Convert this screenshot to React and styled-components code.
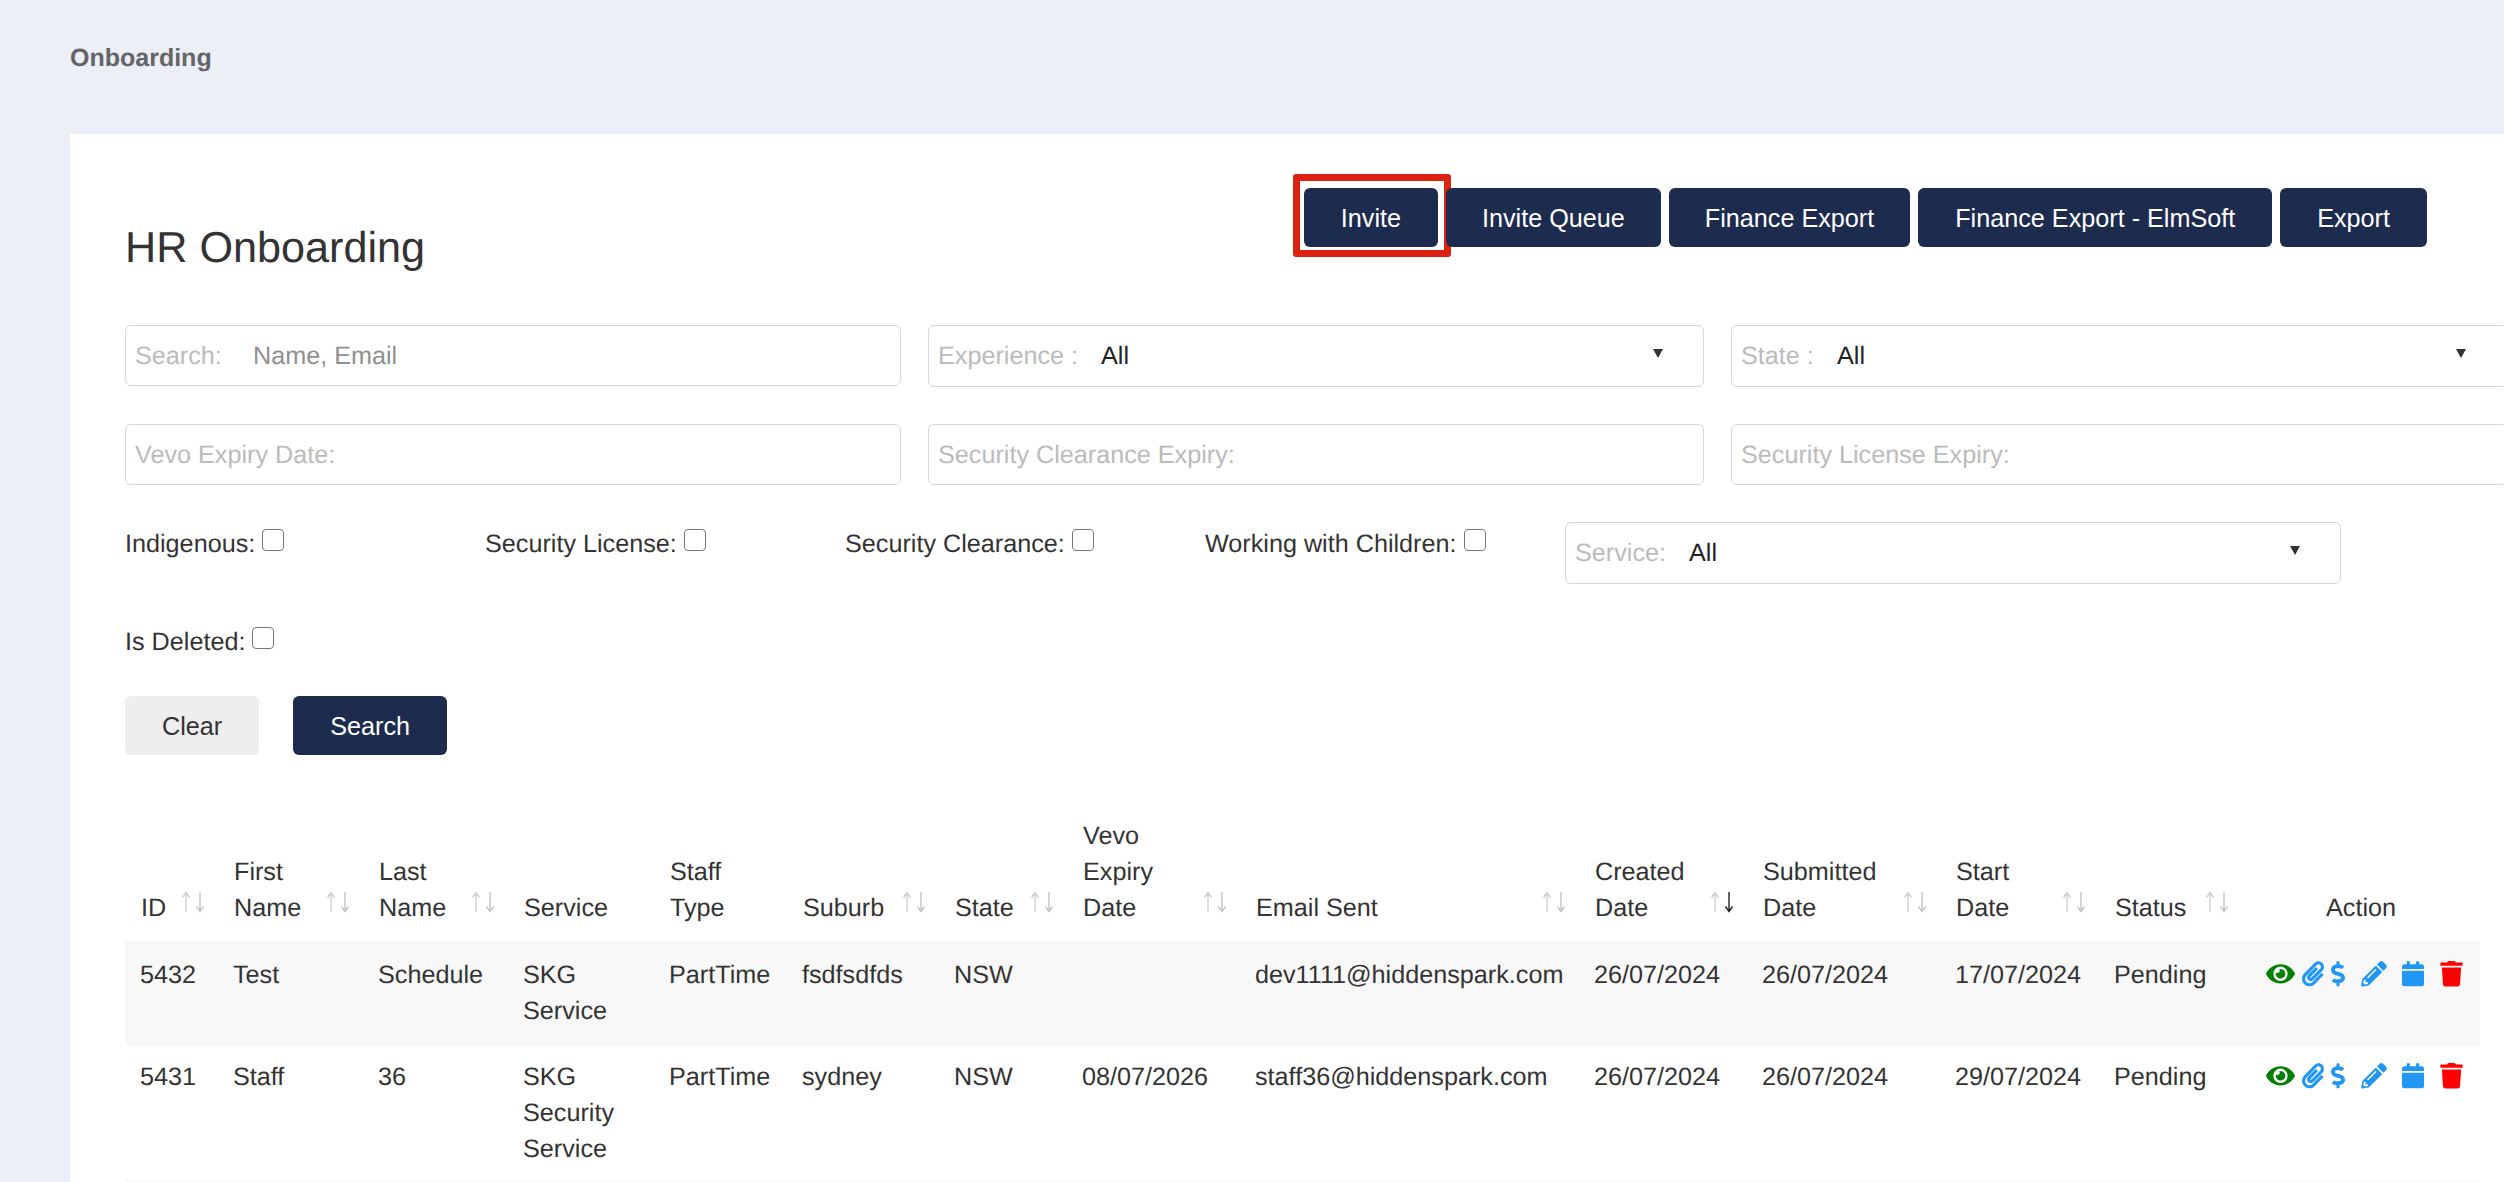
import styled, { createGlobalStyle } from "styled-components";
import { FaEye, FaPaperclip, FaDollarSign, FaPencilAlt, FaCalendar, FaTrash } from "react-icons/fa";

const GlobalStyle = createGlobalStyle`
  html, body {
    margin: 0;
    height: 1182px;
    overflow: hidden;
    background: #edeff7;
    font-family: "Liberation Sans", Arial, sans-serif;
    font-size: 25.2px;
    line-height: 36px;
    color: #333;
    text-rendering: geometricPrecision;
  }
`;

const Page = styled.div`
  width: 2504px;
  height: 1182px;
  overflow: hidden;
`;

const TopBar = styled.div`
  height: 134px;
  padding: 40px 0 0 70px;
  box-sizing: border-box;
  font-size: 25px;
  font-weight: bold;
  color: #636569;
`;

const Card = styled.div`
  margin-left: 70px;
  height: 1048px;
  padding: 54px 24px 0 55px;
  box-sizing: border-box;
  background: #fff;
`;

const HeadRow = styled.div`
  display: flex;
  justify-content: space-between;
  height: 137px;
`;

const Title = styled.h1`
  margin: 0;
  padding-top: 33px;
  font-size: 43.2px;
  line-height: 54px;
  font-weight: normal;
  color: #333;
`;

const Toolbar = styled.div`
  display: flex;
  gap: 8px;
  margin-right: 53px;
  align-self: flex-start;
`;

const Button = styled.button`
  position: relative;
  height: 59px;
  padding: 0 ${(p) => p.$pad || 36}px;
  border: 0;
  border-radius: 6px;
  background: ${(p) => (p.$light ? "#eeeeee" : "#1d2b4f")};
  color: ${(p) => (p.$light ? "#333" : "#fff")};
  font: inherit;
`;

const RedBox = styled.span`
  position: absolute;
  left: -11px;
  top: -14px;
  width: 158px;
  height: 83px;
  box-sizing: border-box;
  border: 7px solid #dd2211;
  border-radius: 3px;
`;

const FilterGrid = styled.div`
  display: grid;
  grid-template-columns: repeat(3, 776px);
  column-gap: 27px;
  row-gap: 37px;
`;

const Field = styled.div`
  display: flex;
  align-items: center;
  height: ${(p) => p.$h || 62}px;
  padding: 0 40px 0 9px;
  box-sizing: border-box;
  border: 1.5px solid #d6d6d6;
  border-radius: 6px;
  color: #bbb;
`;

const FieldLabel = styled.span`
  width: ${(p) => p.$w}px;
  flex: none;
`;

const Hint = styled.span`
  color: #8f8f8f;
`;

const Value = styled.span`
  color: #222;
`;

const Caret = styled.span`
  margin-left: auto;
  margin-bottom: 5px;
  width: 0;
  height: 0;
  border-left: 5px solid transparent;
  border-right: 5px solid transparent;
  border-top: 9px solid #333;
`;

const CheckRow = styled.div`
  display: grid;
  grid-template-columns: repeat(4, 360px) 776px;
  margin-top: 37px;
  height: 62px;
`;

const CheckLabel = styled.label`
  display: flex;
  align-items: flex-start;
  padding-top: 4px;
  color: #333;
`;

const Check = styled.input.attrs({ type: "checkbox" })`
  appearance: none;
  width: 22px;
  height: 22px;
  margin: 3px 0 0 7px;
  border: 1.5px solid #767676;
  border-radius: 4px;
  background: #fff;
`;

const DeletedRow = styled.div`
  margin-top: 36px;
`;

const Actions = styled.div`
  display: flex;
  gap: 34px;
  margin-top: 36px;
`;

const TableWrap = styled.table`
  width: 2355px;
  margin-top: 50px;
  table-layout: fixed;
  border-collapse: collapse;
  border-bottom: 2px solid #f2f2f2;
`;

const Th = styled.th`
  position: relative;
  padding: 13px ${(p) => (p.$sort ? 40 : 16)}px 15px 16px;
  vertical-align: bottom;
  text-align: ${(p) => (p.$center ? "center" : "left")};
  font-weight: normal;
`;

const SortIcon = styled.svg`
  position: absolute;
  right: 13px;
  bottom: 28px;
  width: 24px;
  height: 22px;
`;

const Row = styled.tr`
  background: ${(p) => (p.$odd ? "#f8f8f8" : "#fff")};
`;

const Td = styled.td`
  padding: ${(p) => (p.$odd ? "16px 15px 17px" : "13px 15px 14px")};
  vertical-align: top;
`;

const ActionIcons = styled.div`
  display: flex;
  justify-content: center;
  align-items: flex-start;
  line-height: 0;
  margin: 4px 0 0 6px;
`;

const Icon = styled.span`
  display: inline-flex;
  margin-right: ${(p) => p.$gap || 0}px;
  color: ${(p) => p.$color || "#2196f3"};
  svg {
    width: ${(p) => p.$w}px;
    height: 25.6px;
  }
`;

const columns = [
  { w: 93, label: "ID", sort: true },
  { w: 145, label: "First Name", sort: true },
  { w: 145, label: "Last Name", sort: true },
  { w: 146, label: "Service" },
  { w: 133, label: "Staff Type" },
  { w: 152, label: "Suburb", sort: true },
  { w: 128, label: "State", sort: true },
  { w: 173, label: "Vevo Expiry Date", sort: true },
  { w: 339, label: "Email Sent", sort: true },
  { w: 168, label: "Created Date", sort: true, active: true },
  { w: 193, label: "Submitted Date", sort: true },
  { w: 159, label: "Start Date", sort: true },
  { w: 143, label: "Status", sort: true },
  { w: 238, label: "Action", center: true },
];

const rows = [
  ["5432", "Test", "Schedule", "SKG Service", "PartTime", "fsdfsdfds", "NSW", "", "dev1111@hiddenspark.com", "26/07/2024", "26/07/2024", "17/07/2024", "Pending"],
  ["5431", "Staff", "36", "SKG Security Service", "PartTime", "sydney", "NSW", "08/07/2026", "staff36@hiddenspark.com", "26/07/2024", "26/07/2024", "29/07/2024", "Pending"],
];

const Sort = ({ active }) => (
  <SortIcon viewBox="0 0 24 22" fill="none" strokeWidth="1.4">
    <path d="M5 21V2M1.5 6.5 5 1.5l3.5 5" stroke="#cfcfcf" />
    <path d="M19 1v19M15.5 15.5 19 20.5l3.5-5" stroke={active ? "#222" : "#c4c4c4"} />
  </SortIcon>
);

export default function App() {
  return (
    <Page>
      <GlobalStyle />
      <TopBar>Onboarding</TopBar>
      <Card>
        <HeadRow>
          <Title>HR Onboarding</Title>
          <Toolbar>
            <Button $pad={37}>
              Invite
              <RedBox />
            </Button>
            <Button>Invite Queue</Button>
            <Button>Finance Export</Button>
            <Button $pad={37}>Finance Export - ElmSoft</Button>
            <Button $pad={37}>Export</Button>
          </Toolbar>
        </HeadRow>

        <FilterGrid>
          <Field $h={61}>
            <FieldLabel $w={118}>Search:</FieldLabel>
            <Hint>Name, Email</Hint>
          </Field>
          <Field>
            <FieldLabel $w={163}>Experience :</FieldLabel>
            <Value>All</Value>
            <Caret />
          </Field>
          <Field>
            <FieldLabel $w={96}>State :</FieldLabel>
            <Value>All</Value>
            <Caret />
          </Field>
          <Field $h={61}>Vevo Expiry Date:</Field>
          <Field $h={61}>Security Clearance Expiry:</Field>
          <Field $h={61}>Security License Expiry:</Field>
        </FilterGrid>

        <CheckRow>
          <CheckLabel>Indigenous:<Check /></CheckLabel>
          <CheckLabel>Security License:<Check /></CheckLabel>
          <CheckLabel>Security Clearance:<Check /></CheckLabel>
          <CheckLabel>Working with Children:<Check /></CheckLabel>
          <Field>
            <FieldLabel $w={114}>Service:</FieldLabel>
            <Value>All</Value>
            <Caret />
          </Field>
        </CheckRow>

        <DeletedRow>
          <CheckLabel>Is Deleted:<Check /></CheckLabel>
        </DeletedRow>

        <Actions>
          <Button $light $pad={37}>Clear</Button>
          <Button $pad={37}>Search</Button>
        </Actions>

        <TableWrap>
          <colgroup>
            {columns.map((c) => (
              <col key={c.label} style={{ width: c.w }} />
            ))}
          </colgroup>
          <thead>
            <tr>
              {columns.map((c) => (
                <Th key={c.label} $center={c.center} $sort={c.sort}>
                  {c.label}
                  {c.sort && <Sort active={c.active} />}
                </Th>
              ))}
            </tr>
          </thead>
          <tbody>
            {rows.map((r, i) => (
              <Row key={r[0]} $odd={i === 0}>
                {r.map((v, j) => (
                  <Td key={j} $odd={i === 0}>{v}</Td>
                ))}
                <Td $odd={i === 0}>
                  <ActionIcons>
                    <Icon $w={29} $gap={7} $color="#008000"><FaEye /></Icon>
                    <Icon $w={22} $gap={7}><FaPaperclip /></Icon>
                    <Icon $w={14} $gap={16}><FaDollarSign /></Icon>
                    <Icon $w={26} $gap={15}><FaPencilAlt /></Icon>
                    <Icon $w={22} $gap={16}><FaCalendar /></Icon>
                    <Icon $w={23} $color="#ff0000"><FaTrash /></Icon>
                  </ActionIcons>
                </Td>
              </Row>
            ))}
          </tbody>
        </TableWrap>
      </Card>
    </Page>
  );
}
